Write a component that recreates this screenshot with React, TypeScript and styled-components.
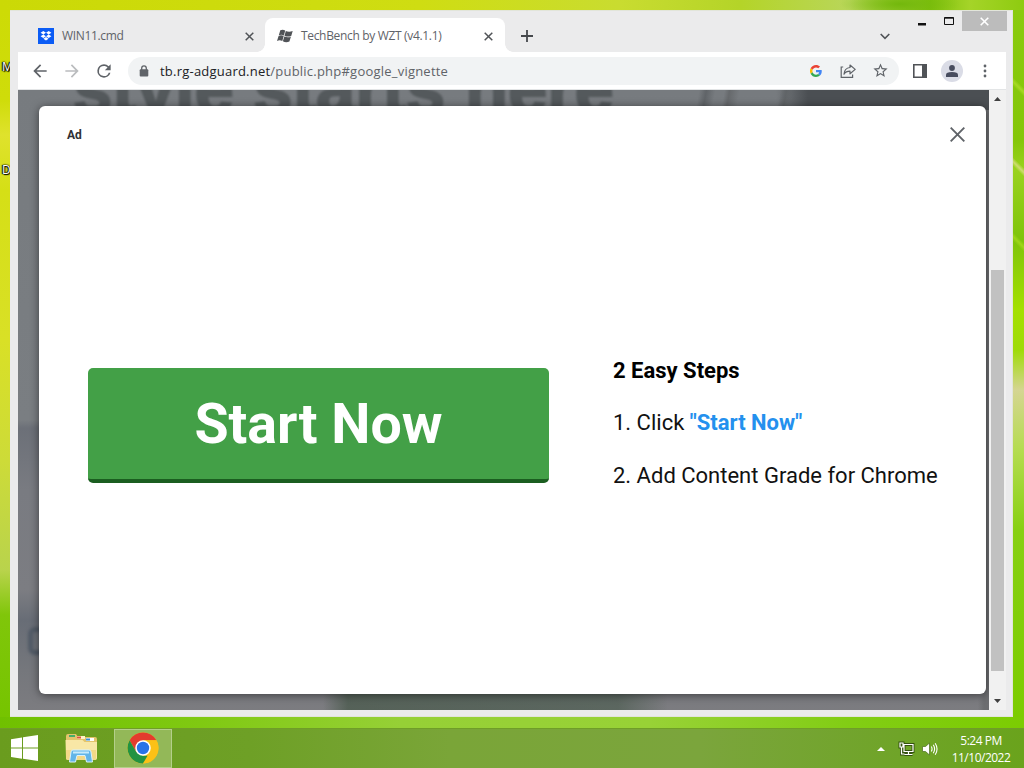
import type { ReactNode } from 'react';
import styled, { createGlobalStyle, css } from 'styled-components';

const uiFont = `'Open Sans', 'Noto Sans', sans-serif`;
const adFont = `Roboto, 'Liberation Sans', sans-serif`;

const GlobalStyle = createGlobalStyle`
  * { box-sizing: border-box; }
  body { margin: 0; overflow: hidden; }
`;

// ── Desktop ────────────────────────────────

const Desktop = styled.div`
  width: 1024px;
  height: 768px;
  display: grid;
  grid-template: 10px 707px 11px 40px / 10px 1003px 11px;
  overflow: hidden;
  font-family: ${uiFont};
  background: #7dc70a;
`;

const WallpaperTop = styled.div`
  grid-column: 1 / -1;
  background:
    radial-gradient(ellipse 60px 14px at 900px 4px, #73b80c, transparent),
    linear-gradient(90deg, #cbd906 0, #cfdd12 420px, #c9dc30 620px, #b4d428 740px, #b9d65a 850px, #7fc00c 930px, #a5d428 970px, #8ecb10 100%);
`;

const WallpaperLeft = styled.div`
  overflow: hidden;
  padding: 50px 0 0 2px;
  background: linear-gradient(#cddb06 0, #cfdc0a 90px, #dfe22c 125px, #d5df16 180px, #d9e026 330px, #cddb38 450px, #b9d34c 560px, #80c60a 605px, #76c400 100%);
`;

const WallpaperRight = styled.div`
  background:
    linear-gradient(225deg, transparent 40%, rgba(200, 235, 60, 0.5) 50%, transparent 60%) 0 60px / 11px 34px no-repeat,
    linear-gradient(225deg, transparent 40%, rgba(230, 225, 150, 0.7) 50%, transparent 60%) 0 140px / 11px 34px no-repeat,
    linear-gradient(225deg, transparent 40%, rgba(190, 232, 40, 0.5) 50%, transparent 60%) 0 215px / 11px 34px no-repeat,
    linear-gradient(#8acb0e 0, #84c608 130px, #9ad21e 160px, #7fc40a 230px, #a4e000 300px, #9fdb08 340px, #d5d592 380px, #b5dc50 440px, #87d012 520px, #7ccc00 100%);
`;

const WallpaperBottom = styled.div`
  grid-column: 1 / -1;
  background: linear-gradient(90deg, #70c000 0, #80c912 200px, #96d036 400px, #98d236 650px, #82cd14 850px, #7ccc02 100%);
`;

const DesktopLabel = styled.div`
  height: 103px;
  font-size: 12px;
  line-height: 14px;
  color: #fff;
  text-shadow: 0 0 1px #000, 1px 1px 1px #000, -1px 0 1px #000, 0 0 2px #000;
`;

// ── Browser window ─────────────────────────

const Window = styled.div`
  display: flex;
  flex-direction: column;
  padding: 0 6px 6px 8px;
  border: 1px solid #e2e5da;
  border-width: 1px 1px 1px 0;
  background: #ebebec;
  min-width: 0;
`;

const TabStrip = styled.div`
  display: flex;
  flex: none;
  height: 41px;
`;

const Tab = styled.div<{ $active?: boolean }>`
  display: flex;
  align-items: center;
  width: ${(p) => (p.$active ? 240 : 247)}px;
  height: 34px;
  margin-top: 7px;
  padding: ${(p) => (p.$active ? '2px 12px 0 12px' : '2px 11px 0 20px')};
  color: #5f6368;
  ${(p) =>
    p.$active &&
    css`
      position: relative;
      background: #fff;
      border-radius: 8px 8px 0 0;

      &::before,
      &::after {
        content: '';
        position: absolute;
        bottom: 0;
        width: 8px;
        height: 8px;
      }
      &::before {
        left: -8px;
        background: radial-gradient(circle at 0 0, transparent 7.5px, #fff 8px);
      }
      &::after {
        right: -8px;
        background: radial-gradient(circle at 100% 0, transparent 7.5px, #fff 8px);
      }
    `}
`;

const TabTitle = styled.span`
  flex: 1;
  margin-left: 8px;
  font-size: 12px;
  line-height: 16px;
  letter-spacing: -0.33px;
  white-space: nowrap;
`;

const NewTab = styled.div`
  display: flex;
  align-items: center;
  justify-content: center;
  width: 28px;
  margin: 9px 0 0 8px;
`;

const CaptionArea = styled.div`
  display: flex;
  align-items: flex-start;
  margin: 0 -1px 0 auto;
`;

const TabSearch = styled.div`
  padding: 22px 18px 0 0;
  line-height: 0;
`;

const CaptionButton = styled.div<{ $close?: boolean }>`
  display: flex;
  align-items: center;
  justify-content: center;
  width: ${(p) => (p.$close ? 45 : 27)}px;
  height: 20px;
  background: ${(p) => (p.$close ? '#bcbcbc' : 'transparent')};
`;

const Toolbar = styled.div`
  display: flex;
  align-items: center;
  flex: none;
  height: 38px;
  padding: 0 13px 0 12px;
  background: #fff;
  border-bottom: 1px solid #e3e5e6;
`;

const NavButton = styled.div`
  display: flex;
  align-items: center;
  justify-content: center;
  width: 20px;
  height: 20px;
  margin-right: 12px;
`;

const Omnibox = styled.div`
  display: flex;
  align-items: center;
  flex: 1;
  height: 28px;
  margin-left: 2px;
  padding: 0 10px 0 11px;
  border-radius: 14px;
  background: #f1f3f4;
`;

const Url = styled.div`
  flex: 1;
  margin-left: 11px;
  font-size: 13px;
  letter-spacing: 0.22px;
  line-height: 18px;
  color: #5f6368;

  b {
    font-weight: 400;
    color: #202124;
  }
`;

const OmniboxActions = styled.div`
  display: flex;
  align-items: center;
  gap: 16px;

  svg:first-child {
    margin-right: 2px;
  }
`;

const ToolbarActions = styled.div`
  display: flex;
  align-items: center;
  gap: 14px;
  margin-left: 14px;
`;

const Avatar = styled.div`
  display: flex;
  align-items: center;
  justify-content: center;
  width: 22px;
  height: 22px;
  border-radius: 50%;
  background: #dadce6;
`;

// ── Page ───────────────────────────────────

const Viewport = styled.div`
  display: flex;
  flex: 1;
  min-height: 0;
`;

const Page = styled.div`
  position: relative;
  flex: 1;
  padding: 16px 3px 16px 21px;
  overflow: hidden;
  background:
    linear-gradient(90deg, transparent 305px, rgba(60, 80, 62, 0.6) 330px, rgba(60, 82, 64, 0.5) 600px, transparent 650px) 0 100% / 100% 18px no-repeat,
    linear-gradient(90deg, transparent 758px, #4b4f53 790px) 0 0 / 100% 20px no-repeat,
    linear-gradient(90deg, transparent 960px, #6c6d70 966px),
    linear-gradient(#777b7f 0, #7a7e82 330px, #6c7078 338px, #797b81 400px, #7c7d82 500px, #686d76 530px, #75777c 580px, #7c7c80 100%);
`;

const Headline = styled.div`
  position: absolute;
  left: 55px;
  top: -41px;
  font-family: 'Liberation Sans', Arial, sans-serif;
  font-size: 70.5px;
  font-weight: 700;
  line-height: 80px;
  white-space: nowrap;
  color: #54595c;
  -webkit-text-stroke: 2px #54595c;
  filter: blur(1px);
`;

const PhotoBlur = styled.div`
  position: absolute;
  left: 600px;
  top: 0;
  width: 180px;
  height: 18px;
  background: linear-gradient(100deg, transparent 80px, #606468 87px, transparent 96px, transparent 105px, #66696c 110px, transparent 120px, transparent 160px, #606467 166px, transparent 172px);
`;

const BlurredGlyph = styled.div`
  position: absolute;
  left: 10px;
  top: 537px;
  width: 22px;
  height: 28px;
  border: 5px solid #525b67;
  border-radius: 7px;
  filter: blur(1.5px);
`;

const AdDialog = styled.div`
  position: relative;
  display: flex;
  flex-direction: column;
  height: 588px;
  border-radius: 6px;
  background: #fff;
  box-shadow: 0 1px 9px rgba(0, 0, 0, 0.5);
  font-family: ${adFont};
`;

const AdHeader = styled.div`
  display: flex;
  align-items: center;
  justify-content: space-between;
  height: 56px;
  padding: 0 21px 0 28px;
`;

const AdLabel = styled.span`
  padding-top: 2px;
  font-size: 12px;
  font-weight: 700;
  color: #303134;
`;

const AdBody = styled.div`
  display: flex;
  align-items: flex-start;
  gap: 64px;
  padding: 196px 0 0 49px;
`;

const StartButton = styled.button`
  width: 461px;
  height: 115px;
  margin-top: 10px;
  padding: 2px 0 0;
  border: 0;
  border-bottom: 4px solid #1b5e20;
  border-radius: 5px;
  background: #43a047;
  color: #fff;
  font: 700 55.5px/109px ${adFont};
`;

const Steps = styled.div`
  font-size: 22px;
  line-height: 26px;
  color: #111;
  white-space: nowrap;
`;

const StepsTitle = styled.h2`
  margin: 0 0 26px;
  font-size: 22px;
  font-weight: 700;
  color: #000;
`;

const Step = styled.p`
  margin: 0 0 27px;

  strong {
    color: #2490ee;
  }
`;

const Scrollbar = styled.div`
  display: flex;
  flex-direction: column;
  width: 17px;
  background: #f1f1f1;
`;

const ScrollArrow = styled.div`
  display: flex;
  align-items: center;
  justify-content: center;
  height: 18px;
`;

const ScrollTrack = styled.div`
  flex: 1;
  padding: 162px 2px 0;
`;

const ScrollThumb = styled.div`
  height: 401px;
  background: #c1c1c1;
`;

// ── Taskbar ────────────────────────────────

const Taskbar = styled.div`
  grid-column: 1 / -1;
  display: flex;
  align-items: stretch;
  border-top: 1px solid #6f9d28;
  background: linear-gradient(90deg, #6a9c1e 0, #6ea026 250px, #7aa538 450px, #7ba53c 700px, #6fa428 900px, #6aa31c 100%);
`;

const TaskButton = styled.div<{ $width: number; $active?: boolean }>`
  display: flex;
  align-items: center;
  justify-content: center;
  width: ${(p) => p.$width}px;
  padding-bottom: 1px;
  border: 1px solid ${(p) => (p.$active ? '#b4cf8a' : 'transparent')};
  background: ${(p) => (p.$active ? '#93b858' : 'transparent')};
`;

const Tray = styled.div`
  display: flex;
  align-items: center;
  gap: 6px;
  margin-left: auto;
  padding-right: 10px;
`;

const TrayArrow = styled.div`
  display: flex;
  margin-right: 7px;
`;

const Clock = styled.div`
  width: 66px;
  margin-left: 4px;
  font-size: 12px;
  line-height: 17px;
  letter-spacing: -0.5px;
  text-align: center;
  white-space: nowrap;
  color: #fff;
`;

// ── Icons ──────────────────────────────────

interface IconProps {
  size?: number;
  color?: string;
  children: ReactNode;
}

const Icon = ({ size = 20, color = '#5f6368', children }: IconProps) => (
  <svg width={size} height={size} viewBox="0 0 24 24" fill={color}>
    {children}
  </svg>
);

const CrossIcon = ({ size, color, width = 1.5 }: { size: number; color: string; width?: number }) => (
  <svg width={size} height={size} viewBox={`0 0 ${size} ${size}`}>
    <path d={`M.7.7L${size - 0.7} ${size - 0.7}M${size - 0.7}.7L.7 ${size - 0.7}`} stroke={color} strokeWidth={width} />
  </svg>
);

const DropboxIcon = () => (
  <svg width="16" height="16" viewBox="0 0 16 16">
    <path d="M0 0h16v16H0z" fill="#0b5cf5" />
    <path
      d="M5.3 3L8 4.75 5.3 6.5 2.6 4.75zM10.7 3l2.7 1.75-2.7 1.75L8 4.75zM5.3 6.5L8 8.25 5.3 10 2.6 8.25zM10.7 6.5l2.7 1.75L10.7 10 8 8.25zM8 9.1l2.6 1.7L8 12.5l-2.6-1.7z"
      fill="#fff"
    />
  </svg>
);

const WindowsFlagIcon = () => (
  <svg width="16" height="16" viewBox="0 0 16 16" fill="#505357">
    <path d="M3.3 2.3C5 1.5 6.6 1.6 8.2 2.5L6.9 7.4C5.3 6.5 3.7 6.4 1.8 7.2z" />
    <path d="M8.8 2.9c1.8 1 4.3 1.2 6.9.1l-1.5 4.9c-2.3.9-4.5.9-6.7-.2z" />
    <path d="M1.6 7.9C3.4 7.1 5.2 7.2 6.7 8.1L5.3 13.1C3.7 12.2 2 12.1 0 12.9z" />
    <path d="M7.3 8.5c2.1 1 4.4 1.1 6.6.2l-1.5 4.9c-2.2.9-4.5.9-6.5-.3z" />
  </svg>
);

const GoogleIcon = () => (
  <svg width="12" height="12" viewBox="0 0 48 48">
    <path fill="#EA4335" d="M24 9.5c3.5 0 6.7 1.2 9.2 3.6l6.9-6.9C35.9 2.4 30.5 0 24 0 14.6 0 6.5 5.4 2.6 13.2l8 6.2C12.4 13.7 17.7 9.5 24 9.5z" />
    <path fill="#4285F4" d="M47 24.6c0-1.6-.2-3.1-.4-4.6H24v9h12.9c-.6 3-2.2 5.5-4.7 7.2l7.7 6C44.4 38 47 31.8 47 24.6z" />
    <path fill="#FBBC05" d="M10.5 28.6a14.5 14.5 0 0 1 0-9.2l-8-6.2a24 24 0 0 0 0 21.6z" />
    <path fill="#34A853" d="M24 48c6.5 0 11.9-2.1 15.9-5.8l-7.7-6c-2.2 1.5-4.9 2.3-8.2 2.3-6.3 0-11.6-4.2-13.5-9.9l-8 6.2C6.5 42.6 14.6 48 24 48z" />
  </svg>
);

const ShareIcon = () => (
  <svg width="16" height="16" viewBox="0 0 16 16" fill="none" stroke="#5f6368" strokeWidth="1.2">
    <path d="M3.2 4H1.2v10.4h11.4v-3" />
    <path d="M10 2l5.2 4.4L10 10.8V8.2c-3 0-4.8 1-6 3 .2-3.8 2.2-6.3 6-6.7z" strokeLinejoin="round" />
  </svg>
);

const SidePanelIcon = () => (
  <svg width="14" height="14" viewBox="0 0 14 14">
    <path d="M.8.8h12.4v12.4H.8z" fill="none" stroke="#505357" strokeWidth="1.6" />
    <path d="M9 0h5v14H9z" fill="#505357" />
  </svg>
);

const StartIcon = () => (
  <svg width="27" height="26" viewBox="0 0 27 26" fill="#fff">
    <path d="M0 4.2l11-1.7v10H0zM12 2.3L27 0v12.5H12zM0 13.5h11v10.2L0 22zM12 13.5h15V26l-15-2.2z" />
  </svg>
);

const ExplorerIcon = () => (
  <svg width="34" height="30" viewBox="0 0 34 30">
    <path d="M2 3q0-2 2-2h8l2 3h17q2 0 2 2v18q0 2-2 2H4q-2 0-2-2z" fill="#e3c46c" />
    <path d="M5 2h6v2H5z" fill="#45ad6a" />
    <path d="M13 3h8v3h-8z" fill="#fff3c8" />
    <path d="M13 3.5h4v2h-4z" fill="#d9563d" />
    <path d="M22 5h8v3h-8z" fill="#fff" />
    <path d="M22 5.5h4v2h-4z" fill="#3d8fd0" />
    <path d="M1.5 7h17l2 2h12.5v16q0 2-2 2h-27q-2 0-2-2z" fill="#f8e7a6" />
    <path d="M2 17h30v8q0 2-2 2H4q-2 0-2-2z" fill="#f3d987" />
    <path d="M7 19q0-2 2-2h16q2 0 2 2l1.500 10h-6L21 22.5h-8L11.5 29h-6z" fill="#62b5e8" stroke="#d9f1fc" />
    <path d="M9 19.5h16" stroke="#c7eafb" strokeWidth="2" />
  </svg>
);

const ChromeIcon = () => (
  <svg width="32" height="32" viewBox="0 0 32 32">
    <circle cx="16" cy="16" r="15.5" fill="#fbc116" />
    <path d="M2.6 8.25A15.5 15.5 0 0 1 29.4 8.25H16L9.3 19.9z" fill="#e33b2e" />
    <path d="M2.6 8.25L9.3 19.9 16 23.75h6.7L16 31.5A15.5 15.5 0 0 1 2.6 8.25z" fill="#229342" />
    <path d="M29.4 8.25A15.5 15.5 0 0 1 16 31.5l6.7-11.6V12L16 8.25z" fill="#fbc116" />
    <circle cx="16" cy="16" r="7.75" fill="#fff" />
    <circle cx="16" cy="16" r="6.2" fill="#2a73e8" />
  </svg>
);

const networkPath = 'M6 3.5h9v7H6zM10.5 10.5v3M6.5 13.5h8M2 2h3v4H2zM3.5 6v7h3';

const NetworkIcon = () => (
  <svg width="17" height="16" viewBox="0 0 17 16" fill="none">
    <path d={networkPath} stroke="#35520f" strokeWidth="3" />
    <path d={networkPath} stroke="#fff" strokeWidth="1.2" />
  </svg>
);

const VolumeIcon = () => (
  <svg width="17" height="16" viewBox="0 0 17 16" fill="none">
    <path d="M1.5 5.5h3L8.5 2v12l-4-3.5h-3z" fill="#fff" stroke="#4b6b1c" strokeWidth=".7" />
    <path d="M10.3 5.5q1.5 2.5 0 5M12.3 3.8q2.6 4.2 0 8.4M14.2 2.2q3.7 5.8 0 11.6" stroke="#fff" strokeWidth="1.1" />
  </svg>
);

const Triangle = ({ down, color = '#404040', width = 7 }: { down?: boolean; color?: string; width?: number }) => (
  <svg width={width} height="4" viewBox="0 0 8 4" preserveAspectRatio="none">
    <path d={down ? 'M0 0h8L4 4z' : 'M0 4h8L4 0z'} fill={color} />
  </svg>
);

// ── App ────────────────────────────────────

export default function App() {
  return (
    <>
      <GlobalStyle />
      <Desktop>
        <WallpaperTop />
        <WallpaperLeft>
          <DesktopLabel>M</DesktopLabel>
          <DesktopLabel>D</DesktopLabel>
        </WallpaperLeft>

        <Window>
          <TabStrip>
            <Tab>
              <DropboxIcon />
              <TabTitle>WIN11.cmd</TabTitle>
              <CrossIcon size={9} color="#505357" />
            </Tab>
            <Tab $active>
              <WindowsFlagIcon />
              <TabTitle>TechBench by WZT (v4.1.1)</TabTitle>
              <CrossIcon size={9} color="#505357" />
            </Tab>
            <NewTab>
              <svg width="12" height="12" viewBox="0 0 12 12">
                <path d="M6 0v12M0 6h12" stroke="#45484c" strokeWidth="1.8" />
              </svg>
            </NewTab>
            <CaptionArea>
              <TabSearch>
                <svg width="10" height="7" viewBox="0 0 10 7">
                  <path d="M.7 1L5 5.3 9.3 1" fill="none" stroke="#505357" strokeWidth="1.6" />
                </svg>
              </TabSearch>
              <CaptionButton>
                <svg width="8" height="10" viewBox="0 0 8 10">
                  <path d="M0 7h8v2.5H0z" fill="#111" />
                </svg>
              </CaptionButton>
              <CaptionButton>
                <svg width="10" height="8" viewBox="0 0 10 8">
                  <path d="M.5.5h9v7h-9zM0 1.2h10" fill="none" stroke="#111" />
                </svg>
              </CaptionButton>
              <CaptionButton $close>
                <CrossIcon size={9} color="#fff" width={1.6} />
              </CaptionButton>
            </CaptionArea>
          </TabStrip>

          <Toolbar>
            <NavButton>
              <Icon>
                <path d="M20 11H7.83l5.59-5.59L12 4l-8 8 8 8 1.41-1.41L7.83 13H20v-2z" />
              </Icon>
            </NavButton>
            <NavButton>
              <Icon color="#babcbe">
                <path d="M12 4l-1.41 1.41L16.17 11H4v2h12.17l-5.58 5.59L12 20l8-8z" />
              </Icon>
            </NavButton>
            <NavButton>
              <Icon>
                <path d="M17.65 6.35A7.96 7.96 0 0 0 12 4a8 8 0 1 0 7.73 10h-2.08A6 6 0 1 1 12 6c1.66 0 3.14.69 4.22 1.78L13 11h7V4l-2.35 2.35z" />
              </Icon>
            </NavButton>
            <Omnibox>
              <svg width="10" height="12" viewBox="0 0 10 12">
                <path d="M2.7 5V3.2a2.3 2.3 0 0 1 4.6 0V5" fill="none" stroke="#5f6368" strokeWidth="1.3" />
                <rect x="0.7" y="4.3" width="8.6" height="7.2" rx="1" fill="#5f6368" />
              </svg>
              <Url>
                <b>tb.rg-adguard.net</b>/public.php#google_vignette
              </Url>
              <OmniboxActions>
                <GoogleIcon />
                <ShareIcon />
                <Icon size={17}>
                  <path d="M22 9.24l-7.19-.62L12 2 9.19 8.63 2 9.24l5.46 4.73L5.82 21 12 17.27 18.18 21l-1.63-7.03L22 9.24zM12 15.4l-3.76 2.27 1-4.28-3.32-2.88 4.38-.38L12 6.1l1.71 4.04 4.38.38-3.32 2.88 1 4.28L12 15.4z" />
                </Icon>
              </OmniboxActions>
            </Omnibox>
            <ToolbarActions>
              <SidePanelIcon />
              <Avatar>
                <svg width="12" height="12" viewBox="0 0 12 12" fill="#474c5e">
                  <circle cx="6" cy="3" r="2.9" />
                  <path d="M0 12V9.8Q0 7 6 7t6 2.8V12z" />
                </svg>
              </Avatar>
              <Icon size={16}>
                <circle cx="12" cy="4.5" r="2.1" />
                <circle cx="12" cy="12" r="2.1" />
                <circle cx="12" cy="19.5" r="2.1" />
              </Icon>
            </ToolbarActions>
          </Toolbar>

          <Viewport>
            <Page>
              <Headline>style starts here</Headline>
              <PhotoBlur />
              <BlurredGlyph />
              <AdDialog>
                <AdHeader>
                  <AdLabel>Ad</AdLabel>
                  <CrossIcon size={15} color="#5f6368" width={1.9} />
                </AdHeader>
                <AdBody>
                  <StartButton>Start Now</StartButton>
                  <Steps>
                    <StepsTitle>2 Easy Steps</StepsTitle>
                    <Step>
                      1. Click <strong>"Start Now"</strong>
                    </Step>
                    <Step>2. Add Content Grade for Chrome</Step>
                  </Steps>
                </AdBody>
              </AdDialog>
            </Page>
            <Scrollbar>
              <ScrollArrow>
                <Triangle />
              </ScrollArrow>
              <ScrollTrack>
                <ScrollThumb />
              </ScrollTrack>
              <ScrollArrow>
                <Triangle down />
              </ScrollArrow>
            </Scrollbar>
          </Viewport>
        </Window>

        <WallpaperRight />
        <WallpaperBottom />

        <Taskbar>
          <TaskButton $width={48}>
            <StartIcon />
          </TaskButton>
          <TaskButton $width={66}>
            <ExplorerIcon />
          </TaskButton>
          <TaskButton $width={58} $active>
            <ChromeIcon />
          </TaskButton>
          <Tray>
            <TrayArrow>
              <Triangle color="#fff" width={8} />
            </TrayArrow>
            <NetworkIcon />
            <VolumeIcon />
            <Clock>
              5:24 PM
              <br />
              11/10/2022
            </Clock>
          </Tray>
        </Taskbar>
      </Desktop>
    </>
  );
}
